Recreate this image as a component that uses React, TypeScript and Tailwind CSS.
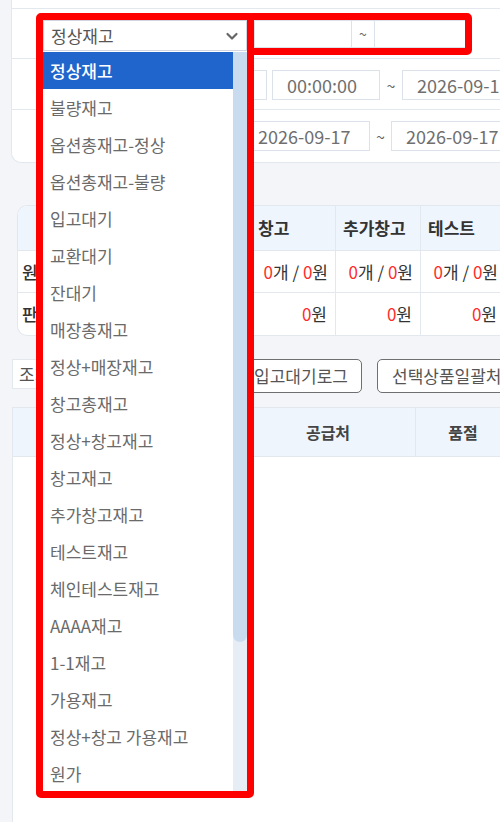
import React from "react";

const stockTypes = [
  "정상재고",
  "불량재고",
  "옵션총재고-정상",
  "옵션총재고-불량",
  "입고대기",
  "교환대기",
  "잔대기",
  "매장총재고",
  "정상+매장재고",
  "창고총재고",
  "정상+창고재고",
  "창고재고",
  "추가창고재고",
  "테스트재고",
  "체인테스트재고",
  "AAAA재고",
  "1-1재고",
  "가용재고",
  "정상+창고 가용재고",
  "원가",
];

const stockCols = ["총재고", "정상", "창고", "추가창고", "테스트"];

function Zero() {
  return <span className="text-[#ff2b2b]">0</span>;
}

function DateBox({ value, className }: { value: string; className: string }) {
  return (
    <div
      className={`flex h-[30px] items-center whitespace-nowrap border border-[#dbe2ea] bg-white pl-[14px] text-[18px] text-[#6f6f6f] ${className}`}
    >
      {value}
    </div>
  );
}

function Tilde({ className }: { className: string }) {
  return (
    <div className={`flex h-[30px] items-center justify-center text-[16px] text-[#666] ${className}`}>~</div>
  );
}

export default function App() {
  return (
    <div className="relative h-[822px] w-[500px] overflow-hidden bg-[#f3f5f8] font-['Noto_Sans_CJK_KR','Noto_Sans',sans-serif] text-[#555]">
      <div className="w-[560px]">
        {/* search conditions card */}
        <div className="ml-[11px] rounded-bl-[10px] border-b border-l border-[#e3e8ee] bg-white">
          <div className="h-[9px] border-b border-[#e3e8ee]" />

          <div className="flex h-[50px] items-start border-b border-[#e3e8ee] pl-[31px] pt-[11px]">
            <div className="relative z-10">
              <div className="flex h-[31px] w-[204px] items-center justify-between border border-[#cfd6df] bg-white pl-[7px] pr-[5px] text-[17px] text-[#555]">
                <span>정상재고</span>
                <svg width="14" height="14" viewBox="0 0 14 14" className="mr-[2px]">
                  <polyline
                    points="2.5,5 7,9.5 11.5,5"
                    fill="none"
                    stroke="#666"
                    strokeWidth="2.2"
                    strokeLinecap="round"
                    strokeLinejoin="round"
                  />
                </svg>
              </div>
              <div className="absolute left-0 top-[32px] flex w-[204px] bg-white">
                <ul className="w-[190px]">
                  {stockTypes.map((t, i) => (
                    <li
                      key={t}
                      className={`flex h-[37px] items-center whitespace-nowrap pl-[7px] text-[17px] ${
                        i === 0 ? "bg-[#1f65cc] font-medium text-white" : "text-[#6a6a6a]"
                      }`}
                    >
                      {t}
                    </li>
                  ))}
                </ul>
                <div className="w-[14px] bg-[#e7edf5]">
                  <div className="h-[590px] rounded-b-full bg-[#c9dbef]" />
                </div>
              </div>
            </div>
            <div className="ml-[7px] flex h-[28px] border border-[#dbe2ea]">
              <div className="w-[96px] bg-white" />
              <div className="flex w-[24px] items-center justify-center border-x border-[#dbe2ea] text-[14px] text-[#666]">
                ~
              </div>
              <div className="w-[91px] bg-white" />
            </div>
          </div>

          <div className="flex h-[51px] items-start border-b border-[#e3e8ee] pl-[118px] pt-[11px]">
            <DateBox value="2026-09-17" className="w-[137px]" />
            <DateBox value="00:00:00" className="ml-[5px] w-[108px]" />
            <Tilde className="w-[22px]" />
            <DateBox value="2026-09-17" className="w-[120px]" />
          </div>

          <div className="flex h-[52px] items-start pl-[231px] pt-[11px]">
            <DateBox value="2026-09-17" className="w-[127px]" />
            <Tilde className="w-[21px]" />
            <DateBox value="2026-09-17" className="w-[120px]" />
          </div>
        </div>

        {/* stock summary table */}
        <div className="ml-[17px] mt-[42px] overflow-hidden rounded-l-[10px] border border-r-0 border-[#e3e8ee] bg-white">
          <div className="flex h-[45px] border-b border-[#e3e8ee] bg-[#eef5fd]">
            <div className="w-[63px] border-r border-[#e3e8ee]" />
            {stockCols.map((c) => (
              <div
                key={c}
                className="flex w-[85px] items-center border-r border-[#e3e8ee] pl-[7px] text-[17px] font-bold text-[#333]"
              >
                {c}
              </div>
            ))}
          </div>
          <div className="flex h-[42px] border-b border-[#e3e8ee]">
            <div className="flex w-[63px] items-center border-r border-[#e3e8ee] pl-[4px] text-[17px] font-medium text-[#333]">
              원가
            </div>
            {stockCols.map((c) => (
              <div
                key={c}
                className="flex w-[85px] items-center justify-end whitespace-nowrap border-r border-[#e3e8ee] pr-[7px] text-[17px] text-[#333]"
              >
                <span>
                  <Zero />개 / <Zero />원
                </span>
              </div>
            ))}
          </div>
          <div className="flex h-[42px]">
            <div className="flex w-[63px] items-center border-r border-[#e3e8ee] pl-[4px] text-[17px] font-medium text-[#333]">
              판매가
            </div>
            {stockCols.map((c) => (
              <div
                key={c}
                className="flex w-[85px] items-center justify-end border-r border-[#e3e8ee] pr-[8px] text-[17px] text-[#333]"
              >
                <span>
                  <Zero />원
                </span>
              </div>
            ))}
          </div>
        </div>

        {/* list controls */}
        <div className="ml-[12px] mt-[23px] flex items-start">
          <div className="flex h-[30px] w-[200px] items-center border border-[#e3e8ee] bg-white pl-[6px] text-[17px] text-[#555]">
            조회 30개씩
          </div>
          <button className="ml-[28px] flex h-[34px] w-[122px] items-center justify-center whitespace-nowrap rounded-[5px] border border-[#6f6f6f] bg-white text-[17px] text-[#555]">
            입고대기로그
          </button>
          <button className="ml-[15px] flex h-[34px] w-[170px] items-center whitespace-nowrap rounded-[5px] border border-[#6f6f6f] bg-white pl-[14px] text-[17px] text-[#555]">
            선택상품일괄처리
          </button>
        </div>

        {/* product list table */}
        <div className="ml-[12px] mt-[14px] h-[420px] border-l border-t border-[#e3e8ee] bg-white">
          <div className="flex h-[49px] border-b border-[#e3e8ee] bg-[#eef5fd] text-[16px] font-bold text-[#444]">
            <div className="w-[228px]" />
            <div className="flex w-[174px] items-center justify-center">공급처</div>
            <div className="flex w-[95px] items-center justify-center border-l border-[#e3e8ee]">품절</div>
          </div>
        </div>
      </div>

      {/* highlight outlines */}
      <div className="pointer-events-none absolute left-[36px] top-[13px] z-20 h-[785px] w-[218px] rounded-[5px] border-[7px] border-[#ff0000]" />
      <div className="pointer-events-none absolute left-[247px] top-[13px] z-20 h-[42px] w-[225px] rounded-[5px] border-[7px] border-[#ff0000]" />
    </div>
  );
}
